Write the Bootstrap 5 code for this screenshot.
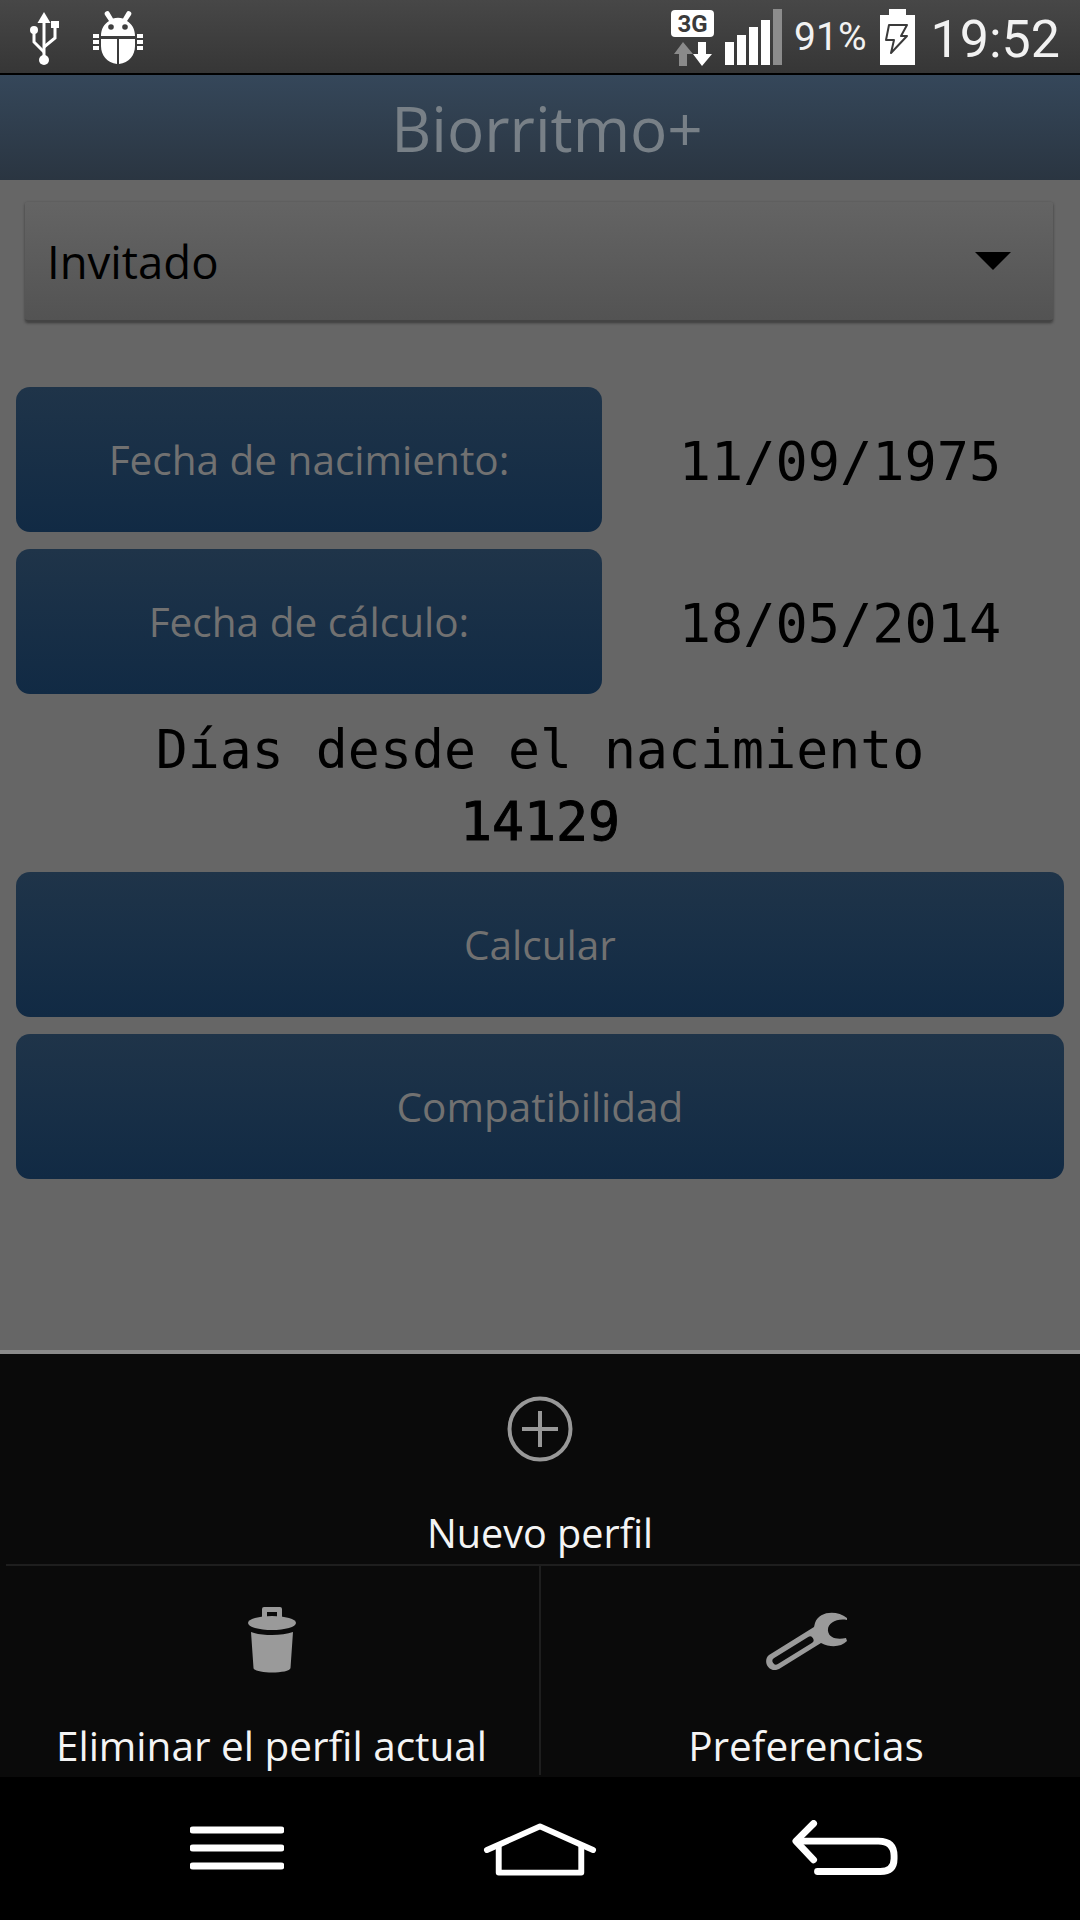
<!DOCTYPE html>
<html lang="es">
<head>
  <meta charset="UTF-8" />
  <meta name="viewport" content="width=device-width, initial-scale=1.0"/>
  <title>Biorritmo+</title>
  <link href="https://cdn.jsdelivr.net/npm/bootstrap@5.3.2/dist/css/bootstrap.min.css" rel="stylesheet" />
  <style>
    html, body { margin: 0; height: 100%; background: #000; overflow: hidden; }
    body { font-family: "Open Sans", "Noto Sans", sans-serif; width: 1080px; height: 1920px; }
    .screen { width: 1080px; height: 1920px; }

    /* status bar */
    .status-bar { height: 75px; background: linear-gradient(#474747, #363636); border-bottom: 2px solid #000; padding: 9px 20px 0 27px; color: #f2f2f2; font-family: Roboto, sans-serif; }
    .ic-bug { margin-left: 29px; margin-top: 1px; }
    .ic-signal { margin-left: 10px; }
    .st-pct { font-size: 39px; font-weight: 400; line-height: 1; margin: 9px 13px 0 11px; }
    .st-time { font-size: 52px; font-weight: 400; line-height: 1; margin: 5px 0 0 16px; }

    /* title */
    .app-title { height: 105px; background: linear-gradient(#35475a, #2a3541); color: #788087; font-size: 62px; line-height: 107px; text-align: center; padding-left: 14px; }

    /* content */
    .content-area { height: 1170px; background: #666; padding: 22px 16px 0; }
    .spinner-box { height: 120px; margin: 0 11px 65px 9px; padding: 0 42px 0 22px; background: linear-gradient(#646464, #535353); border-radius: 3px; border-bottom: 2px solid #444; box-shadow: 0 1px 3px rgba(0,0,0,.45); color: #000; font-size: 45.5px; }
    .caret-down { width: 0; height: 0; border-left: 18px solid transparent; border-right: 18px solid transparent; border-top: 18px solid #000; }
    .btn-bio { display: flex; align-items: center; justify-content: center; height: 145px; background: linear-gradient(#1f3449, #112a44); border: 0; border-radius: 14px; color: #717171; font-size: 40.5px; padding: 2px 0 0; }
    .btn-bio:hover { background: linear-gradient(#1f3449, #112a44); color: #717171; }
    .date-row { margin-bottom: 17px; }
    .date-row .btn-bio { width: 586px; flex: none; }
    .date-value { flex: 1; text-align: center; font-family: "DejaVu Sans Mono", monospace; font-size: 53.6px; color: #000; padding: 5px 0 0 14px; }
    .days-text { font-family: "DejaVu Sans Mono", monospace; font-size: 53.2px; line-height: 72px; color: #000; text-align: center; margin: 20px 0 14px; }
    .days-text strong { display: block; font-weight: 400; -webkit-text-stroke: 1px #000; }
    .wide-btn { margin-bottom: 17px; }

    /* options menu */
    .menu-panel { height: 427px; background: #0a0a0a; border-top: 4px solid #8b8b8b; color: #f4f4f4; font-size: 40.5px; }
    .menu-top { height: 212px; margin-left: 6px; padding-right: 6px; border-bottom: 2px solid #1e1e1e; font-size: 39.6px; }
    .menu-cell { display: flex; flex-direction: column; align-items: center; }
    .menu-bottom .menu-cell { height: 209px; }
    .menu-bottom .cell-left { width: 539px; padding-left: 4px; }
    .menu-bottom .cell-right { width: 541px; border-left: 2px solid #1e1e1e; padding-right: 9px; }
    .menu-label { line-height: 54px; white-space: nowrap; }
    .ic-plus { margin-top: 42px; }
    .ic-plus + .menu-label { margin-top: 44px; }
    .ic-trash { margin-top: 40px; }
    .ic-trash + .menu-label { margin-top: 45px; }
    .ic-wrench { margin-top: 45px; }
    .ic-wrench + .menu-label { margin-top: 48px; }

    /* nav bar */
    .nav-keys { height: 143px; background: #000; padding-left: 190px; padding-top: 42px; }
    .key-menu { margin-top: 7px; }
    .key-home { margin-left: 199px; margin-top: 4px; }
    .key-back { margin-left: 195px; margin-top: 1px; }
  </style>
</head>
<body>
<div class="screen d-flex flex-column">

  <!-- Status bar -->
  <div class="status-bar d-flex align-items-start">
    <svg width="36" height="57" viewBox="0 0 36 57">
      <g fill="#fff">
        <path d="M17 3 L23.500 14 H10.500 Z"/>
        <circle cx="17" cy="51" r="5"/>
        <circle cx="7" cy="21" r="4"/>
        <rect x="24" y="12" width="8" height="7"/>
      </g>
      <g fill="none" stroke="#fff" stroke-width="3">
        <path d="M17 12 V47"/>
        <path d="M7 22 V33 L17 43"/>
        <path d="M28 18 V29 L17 38"/>
      </g>
    </svg>
    <svg width="52" height="54" viewBox="0 0 52 54" class="ic-bug flex-shrink-0" fill="#fff">
      <path d="M9 26 C9 19 12 14 17 11 L13 5 a2.6 2.6 0 0 1 4.5 -2.6 L21 8.500 C24 7.500 28 7.500 31 8.500 L34.500 2.400 a2.600 2.600 0 0 1 4.500 2.600 L35 11 C40 14 43 19 43 26 Z"/>
      <path d="M9 29 H25 V54 C15 53 9 45 9 36 Z"/>
      <path d="M27 29 H43 V36 C43 45 37 53 27 54 Z"/>
      <rect x="1" y="24" width="6" height="4"/><rect x="1" y="30" width="6" height="4"/><rect x="1" y="36" width="6" height="4"/>
      <rect x="45" y="24" width="6" height="4"/><rect x="45" y="30" width="6" height="4"/><rect x="45" y="36" width="6" height="4"/>
      <circle cx="19" cy="17" r="2.800" fill="#3f3f3f"/><circle cx="33" cy="17" r="2.800" fill="#3f3f3f"/>
    </svg>
    <div class="ms-auto d-flex align-items-start">
      <svg width="44" height="58" viewBox="0 0 44 58">
        <rect x="0" y="1" width="43" height="27" rx="4" fill="#fff"/>
        <text x="21.500" y="23" text-anchor="middle" font-family="Roboto, sans-serif" font-weight="700" font-size="24" fill="#3a3a3a">3G</text>
        <path d="M12 33 L22 45 H16 V57 H8 V45 H3 Z" fill="#8a8a8a"/>
        <path d="M31 57 L41 45 H35 V33 H27 V45 H22 Z" fill="#fff"/>
      </svg>
      <svg width="58" height="56" viewBox="0 0 58 56" class="ic-signal">
        <rect x="0" y="33" width="9" height="23" fill="#fff"/>
        <rect x="12" y="26" width="9" height="30" fill="#fff"/>
        <rect x="24" y="18" width="9" height="38" fill="#fff"/>
        <rect x="36" y="11" width="9" height="45" fill="#fff"/>
        <rect x="48" y="0" width="9" height="56" fill="#8c8c8c"/>
      </svg>
      <span class="st-pct">91%</span>
      <svg width="35" height="56" viewBox="0 0 35 56">
        <path d="M9 0 H26 V6 H35 V56 H0 V6 H9 Z" fill="#fff"/>
        <path d="M9 16 H27 L21 27 H27 L11 44 L14 31 H6 Z" fill="#fff" stroke="#3a3a3a" stroke-width="2" stroke-linejoin="round"/>
      </svg>
      <span class="st-time">19:52</span>
    </div>
  </div>

  <!-- Title -->
  <div class="app-title">Biorritmo+</div>

  <!-- Main content -->
  <div class="content-area">
    <div class="spinner-box d-flex align-items-center justify-content-between">
      <span>Invitado</span>
      <span class="caret-down"></span>
    </div>

    <div class="date-row d-flex align-items-center">
      <button type="button" class="btn btn-bio">Fecha de nacimiento:</button>
      <div class="date-value">11/09/1975</div>
    </div>
    <div class="date-row d-flex align-items-center">
      <button type="button" class="btn btn-bio">Fecha de cálculo:</button>
      <div class="date-value">18/05/2014</div>
    </div>

    <div class="days-text">Días desde el nacimiento<strong>14129</strong></div>

    <button type="button" class="btn btn-bio w-100 wide-btn">Calcular</button>
    <button type="button" class="btn btn-bio w-100 wide-btn">Compatibilidad</button>
  </div>

  <!-- Options menu -->
  <div class="menu-panel">
    <div class="menu-top menu-cell">
      <svg width="66" height="66" viewBox="0 0 66 66" class="ic-plus">
        <circle cx="33" cy="33" r="30.500" fill="none" stroke="#989898" stroke-width="4"/>
        <path d="M15 33 H51 M33 15 V51" stroke="#989898" stroke-width="4" fill="none"/>
      </svg>
      <div class="menu-label">Nuevo perfil</div>
    </div>
    <div class="menu-bottom d-flex">
      <div class="menu-cell cell-left">
        <svg width="48" height="68" viewBox="0 0 48 68" class="ic-trash">
          <path d="M14 11 V3 a2 2 0 0 1 2 -2 H32 a2 2 0 0 1 2 2 V11 H29 V6 H19 V11 Z" fill="#9a9a9a"/>
          <ellipse cx="24" cy="17" rx="24" ry="7" fill="#9a9a9a"/>
          <path d="M3 26 C14 30 34 30 45 26 L42.500 62 C42 68 6 68 5.500 62 Z" fill="#9a9a9a"/>
        </svg>
        <div class="menu-label">Eliminar el perfil actual</div>
      </div>
      <div class="menu-cell cell-right">
        <svg width="82" height="60" viewBox="0 0 82 60" class="ic-wrench">
          <path d="M82 7 C72 -1 54 0 50 12 L49 16 L4 44 C-2 49 2 60 11 59 L14 58 L56 32 C66 37 76 36 82 30 L81 27 C72 29 64 27 63 20 C62 13 71 7 82 9 Z" fill="#9a9a9a"/>
          <path d="M11 50 L45 29" stroke="#0a0a0a" stroke-width="7" stroke-linecap="round" fill="none"/>
        </svg>
        <div class="menu-label">Preferencias</div>
      </div>
    </div>
  </div>

  <!-- Navigation keys -->
  <div class="nav-keys d-flex align-items-start">
    <svg width="94" height="48" viewBox="0 0 94 48" class="key-menu">
      <path d="M3 4 H91 M3 22 H91 M3 40 H91" stroke="#fff" stroke-width="7" stroke-linecap="round" fill="none"/>
    </svg>
    <svg width="114" height="54" viewBox="0 0 116 54" class="key-home">
      <path d="M4 27 L58 3 L112 27" stroke="#fff" stroke-width="6" stroke-linecap="round" stroke-linejoin="round" fill="none"/>
      <path d="M16 22 V50 H100 V22" stroke="#fff" stroke-width="6" stroke-linejoin="round" fill="none"/>
    </svg>
    <svg width="106" height="56" viewBox="0 0 108 56" class="key-back">
      <path d="M22 3 L4 21 L22 40" stroke="#fff" stroke-width="7" stroke-linecap="round" stroke-linejoin="round" fill="none"/>
      <path d="M6 21 H88 Q104 21 104 36 V39 Q104 52 90 52 H26" stroke="#fff" stroke-width="7" stroke-linecap="round" fill="none"/>
    </svg>
  </div>

</div>
<script src="https://cdn.jsdelivr.net/npm/bootstrap@5.3.2/dist/js/bootstrap.bundle.min.js"></script>
</body>
</html>
